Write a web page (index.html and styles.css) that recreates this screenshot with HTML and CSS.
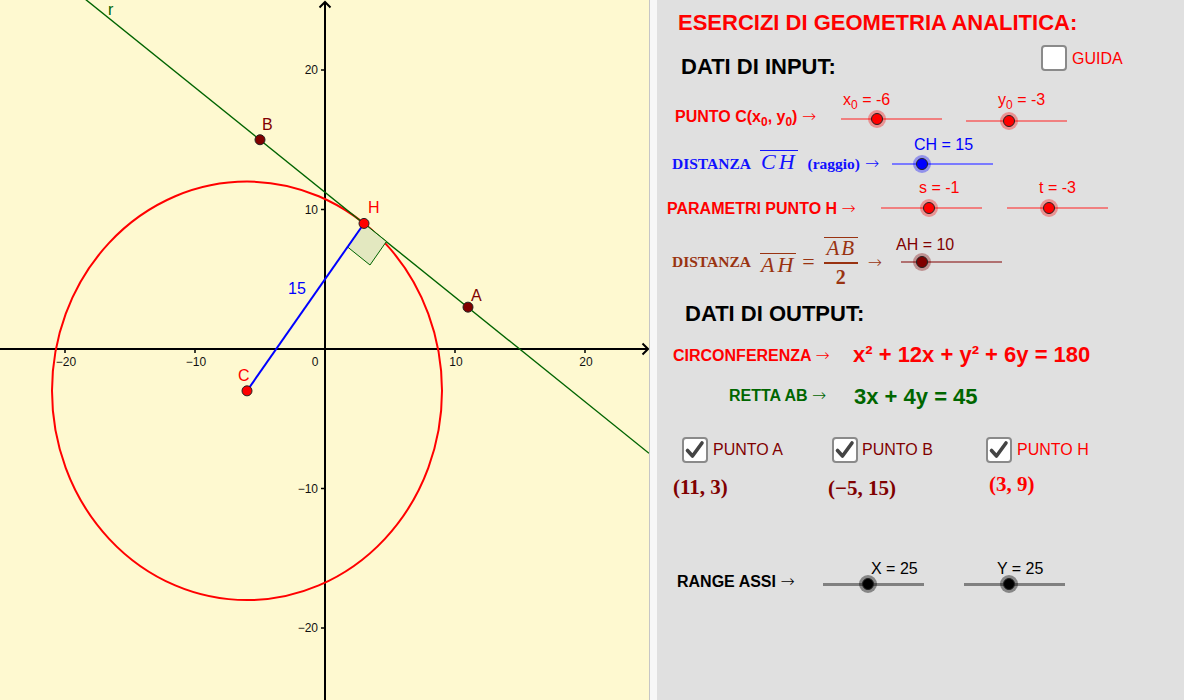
FILE: index.html
```html
<!DOCTYPE html>
<html lang="it">
<head>
<meta charset="utf-8">
<title>Esercizi di geometria analitica</title>
<link rel="stylesheet" href="styles.css">
</head>
<body>
<div class="app">
  <div class="graph">
    <svg class="plot" width="649" height="700" viewBox="0 0 649 700">
      <!-- axes -->
      <line x1="0" y1="349" x2="647" y2="349" stroke="#000" stroke-width="2"/>
      <polyline points="642.5,343.5 648,349 642.5,354.5" fill="none" stroke="#000" stroke-width="2"/>
      <line x1="325" y1="700" x2="325" y2="2" stroke="#000" stroke-width="2"/>
      <polyline points="319.5,7.5 325,2 330.5,7.5" fill="none" stroke="#000" stroke-width="2"/>
      <g stroke="#000" stroke-width="1.5">
        <line x1="65" y1="349" x2="65" y2="353"/>
        <line x1="195" y1="349" x2="195" y2="353"/>
        <line x1="455" y1="349" x2="455" y2="353"/>
        <line x1="585" y1="349" x2="585" y2="353"/>
        <line x1="321" y1="70" x2="325" y2="70"/>
        <line x1="321" y1="209.5" x2="325" y2="209.5"/>
        <line x1="321" y1="488.5" x2="325" y2="488.5"/>
        <line x1="321" y1="628" x2="325" y2="628"/>
      </g>
      <g class="ax" text-anchor="middle">
        <text x="66" y="366">−20</text>
        <text x="196" y="366">−10</text>
        <text x="315" y="366">0</text>
        <text x="456" y="366">10</text>
        <text x="586" y="366">20</text>
      </g>
      <g class="ax" text-anchor="end">
        <text x="318" y="74">20</text>
        <text x="318" y="213.5">10</text>
        <text x="318" y="492.5">−10</text>
        <text x="318" y="632">−20</text>
      </g>
      <!-- circle -->
      <ellipse cx="247" cy="390.85" rx="195" ry="209.25" fill="none" stroke="#ff0000" stroke-width="2"/>
      <!-- line r -->
      <line x1="0" y1="-69.5" x2="649" y2="453.3" stroke="#006400" stroke-width="1.4"/>
      <!-- right angle -->
      <polygon points="364,223.45 386.4,241.5 370,265 347.6,247" fill="#e3e8c0" stroke="#006400" stroke-width="1"/>
      <!-- segment CH -->
      <line x1="247" y1="390.85" x2="364" y2="223.45" stroke="#0000ff" stroke-width="2"/>
      <!-- points -->
      <circle cx="260" cy="139.75" r="5" fill="#800000" stroke="#222" stroke-width="1"/>
      <circle cx="468" cy="307.15" r="5" fill="#800000" stroke="#222" stroke-width="1"/>
      <circle cx="364" cy="223.45" r="5" fill="#ff0000" stroke="#222" stroke-width="1"/>
      <circle cx="247" cy="390.85" r="5" fill="#ff0000" stroke="#222" stroke-width="1"/>
      <g class="pl">
        <text x="262" y="130" fill="#800000">B</text>
        <text x="368" y="213" fill="#ff0000">H</text>
        <text x="471" y="301" fill="#800000">A</text>
        <text x="238" y="381" fill="#ff0000">C</text>
        <text x="108" y="15" fill="#006400">r</text>
        <text x="288" y="294" fill="#0000ff">15</text>
      </g>
    </svg>
  </div>
  <div class="sep"></div>
  <div class="panel">
    <div class="row r-title">
      <div class="title">ESERCIZI DI GEOMETRIA ANALITICA:</div>
    </div>

    <div class="row r-input">
      <div class="head head-in">DATI DI INPUT:</div>
      <div class="box guida-box"></div>
      <div class="guida">GUIDA</div>
    </div>

    <div class="row r-c">
      <div class="lab lab-c">PUNTO C(x<sub>0</sub>, y<sub>0</sub>) <span class="arr">→</span></div>
      <div class="slider red s-x0">
        <div class="slabel">x<sub>0</sub> = -6</div>
        <div class="track"><div class="line"></div><div class="thumb" style="left:30px"></div></div>
      </div>
      <div class="slider red s-y0">
        <div class="slabel">y<sub>0</sub> = -3</div>
        <div class="track"><div class="line"></div><div class="thumb" style="left:37px"></div></div>
      </div>
    </div>

    <div class="row r-ch">
      <div class="lab lab-ch"><span class="dist">DISTANZA</span><span class="ovl">CH</span><span class="rg">(raggio)</span><span class="arr">→</span></div>
      <div class="slider blue s-ch">
        <div class="slabel">CH = 15</div>
        <div class="track"><div class="line"></div><div class="thumb" style="left:24px"></div></div>
      </div>
    </div>

    <div class="row r-h">
      <div class="lab lab-h">PARAMETRI PUNTO H <span class="arr">→</span></div>
      <div class="slider red s-s">
        <div class="slabel">s = -1</div>
        <div class="track"><div class="line"></div><div class="thumb" style="left:42px"></div></div>
      </div>
      <div class="slider red s-t">
        <div class="slabel">t = -3</div>
        <div class="track"><div class="line"></div><div class="thumb" style="left:36px"></div></div>
      </div>
    </div>

    <div class="row r-ah">
      <div class="lab lab-ah">
        <span class="dist">DISTANZA</span>
        <span class="ovl ovl-ah">AH</span>
        <span class="eq">=</span>
        <span class="frac"><span class="num ovl">AB</span><span class="bar"></span><span class="den">2</span></span>
        <span class="arr arr-ah">→</span>
      </div>
      <div class="slider brown s-ah">
        <div class="slabel">AH = 10</div>
        <div class="track"><div class="line"></div><div class="thumb" style="left:15px"></div></div>
      </div>
    </div>

    <div class="row r-out">
      <div class="head head-out">DATI DI OUTPUT:</div>
    </div>

    <div class="row r-circ">
      <div class="lab lab-circ">CIRCONFERENZA <span class="arr">→</span></div>
      <div class="eqn eqn-red">x² + 12x + y² + 6y = 180</div>
    </div>

    <div class="row r-retta">
      <div class="lab lab-retta">RETTA AB <span class="arr">→</span></div>
      <div class="eqn eqn-green">3x + 4y = 45</div>
    </div>

    <div class="row r-checks">
      <div class="chk chk-a">
        <div class="box checked"><svg width="22" height="22" viewBox="0 0 22 22"><path d="M3.5 11.5 L8.5 17 L18 4" fill="none" stroke="#444" stroke-width="3.6" stroke-linecap="round" stroke-linejoin="round"/></svg></div>
        <span class="ctext dark">PUNTO A</span>
      </div>
      <div class="chk chk-b">
        <div class="box checked"><svg width="22" height="22" viewBox="0 0 22 22"><path d="M3.5 11.5 L8.5 17 L18 4" fill="none" stroke="#444" stroke-width="3.6" stroke-linecap="round" stroke-linejoin="round"/></svg></div>
        <span class="ctext dark">PUNTO B</span>
      </div>
      <div class="chk chk-h">
        <div class="box checked"><svg width="22" height="22" viewBox="0 0 22 22"><path d="M3.5 11.5 L8.5 17 L18 4" fill="none" stroke="#444" stroke-width="3.6" stroke-linecap="round" stroke-linejoin="round"/></svg></div>
        <span class="ctext redt">PUNTO H</span>
      </div>
    </div>

    <div class="row r-coords">
      <div class="coord co-a">(11, 3)</div>
      <div class="coord co-b">(−5, 15)</div>
      <div class="coord co-h">(3, 9)</div>
    </div>

    <div class="row r-range">
      <div class="lab lab-range">RANGE ASSI <span class="arr">→</span></div>
      <div class="slider black s-x">
        <div class="slabel">X = 25</div>
        <div class="track"><div class="line"></div><div class="thumb" style="left:39px"></div></div>
      </div>
      <div class="slider black s-y">
        <div class="slabel">Y = 25</div>
        <div class="track"><div class="line"></div><div class="thumb" style="left:39px"></div></div>
      </div>
    </div>
  </div>
</div>
</body>
</html>
```
FILE: styles.css
```css
body {
  margin: 0;
  font-family: "Liberation Sans", Arial, sans-serif;
}
.app {
  display: flex;
  width: 1184px;
  height: 700px;
  overflow: hidden;
}
.graph {
  flex: none;
  width: 649px;
  height: 700px;
  background: #fef9d0;
}
.plot {
  display: block;
}
.ax {
  font-family: "Liberation Sans", Arial, sans-serif;
  font-size: 12px;
  fill: #111;
}
.pl {
  font-family: "Liberation Sans", Arial, sans-serif;
  font-size: 16px;
}
.sep {
  flex: none;
  width: 7px;
  border-left: 1px solid #c6c6c6;
  background: #f7f7f7;
}
.panel {
  flex: 1;
  background: #e0e0e0;
  display: flex;
  flex-direction: column;
}
.row {
  display: flex;
  align-items: flex-start;
  flex: none;
}
sub {
  font-size: 0.75em;
  vertical-align: -0.35em;
  line-height: 0;
}
.arr {
  font-family: "DejaVu Sans", sans-serif;
  font-weight: 200;
  font-size: 17px;
}

/* title */
.r-title { height: 36px; }
.title {
  margin: 10px 0 0 21px;
  font-size: 22px;
  line-height: 26px;
  font-weight: bold;
  color: #ff0000;
  white-space: nowrap;
}

/* headings */
.head {
  font-size: 22px;
  line-height: 26px;
  font-weight: bold;
  color: #000;
  white-space: nowrap;
}
.r-input { height: 48px; }
.head-in {
  margin: 18px 0 0 24px;
  width: 360px;
}
.box {
  flex: none;
  box-sizing: border-box;
  width: 26px;
  height: 26px;
  border: 2px solid #8a8a8a;
  border-radius: 4px;
  background: #fff;
  display: flex;
  align-items: center;
  justify-content: center;
}
.guida-box { margin-top: 9px; }
.guida {
  margin: 14px 0 0 5px;
  font-size: 16px;
  line-height: 18px;
  color: #ff0000;
}

/* labels */
.lab {
  flex: none;
  font-size: 16px;
  line-height: 20px;
  font-weight: bold;
  white-space: nowrap;
}
.r-c { height: 50px; }
.lab-c {
  color: #ff0000;
  margin: 22px 0 0 18px;
  width: 166px;
}

.r-ch { height: 46px; }
.lab-ch {
  color: #1010ff;
  font-family: "Liberation Serif", "Times New Roman", serif;
  margin: 16px 0 0 15px;
  width: 220px;
  height: 28px;
  display: flex;
  align-items: baseline;
}
.ovl {
  display: inline-block;
  font-family: "Liberation Serif", "Times New Roman", serif;
  font-style: italic;
  font-weight: normal;
  font-size: 21px;
  line-height: 15px;
  letter-spacing: 2px;
  padding: 3px 0 0 1px;
  border-top: 1.5px solid currentColor;
}
.lab-ch .ovl {
  font-size: 22px;
  letter-spacing: 3px;
  margin: 0 10px 0 9px;
}
.rg { font-size: 15.5px; margin-right: 5px; }

.r-h { height: 46px; }
.lab-h {
  color: #ff0000;
  margin: 18px 0 0 10px;
  width: 214px;
}

.r-ah { height: 64px; }
.lab-ah {
  color: #993311;
  font-family: "Liberation Serif", "Times New Roman", serif;
  margin: 6px 0 0 15px;
  width: 229px;
  height: 60px;
  display: flex;
  align-items: center;
}
.dist { font-size: 15.5px; }
.ovl-ah { margin-left: 9px; font-size: 22px; letter-spacing: 3px; }
.eq {
  font-size: 22px;
  font-weight: normal;
  margin-left: 6px;
}
.frac {
  display: flex;
  flex-direction: column;
  align-items: center;
  margin-left: 9px;
  width: 34px;
}
.frac .num {
  font-size: 21px;
  padding-top: 3px;
  width: 34px;
  box-sizing: border-box;
  text-align: center;
}
.frac .bar {
  width: 34px;
  height: 1.5px;
  background: currentColor;
  margin-top: 6px;
}
.frac .den {
  font-size: 20px;
  line-height: 20px;
  margin-top: 3px;
}
.arr-ah {
  margin-left: 10px;
}

/* sliders */
.slider {
  flex: none;
  width: 101px;
  display: flex;
  flex-direction: column;
}
.slabel {
  height: 16px;
  font-size: 16px;
  line-height: 16px;
  white-space: nowrap;
}
.track {
  position: relative;
  height: 14px;
  display: flex;
  align-items: center;
}
.line {
  width: 100%;
  height: 2px;
}
.thumb {
  position: absolute;
  top: 1px;
  box-sizing: border-box;
  width: 12px;
  height: 12px;
  border-radius: 50%;
  border: 1px solid #222;
}
.red .slabel { color: #ff0000; }
.red .line { background: #f08080; }
.red .thumb { background: #ff0000; box-shadow: 0 0 0 3px rgba(255, 0, 0, 0.35); }
.blue .slabel { color: #0000ff; }
.blue .line { background: #7a7aff; }
.blue .thumb { background: #0000ff; box-shadow: 0 0 0 3px rgba(0, 0, 255, 0.35); }
.brown .slabel { color: #800000; }
.brown .line { background: #b07070; }
.brown .thumb { background: #800000; box-shadow: 0 0 0 3px rgba(128, 0, 0, 0.35); }
.black .slabel { color: #000; }
.black .line { background: #808080; height: 3px; }
.black .thumb { background: #000; box-shadow: 0 0 0 3px rgba(0, 0, 0, 0.4); }

.s-x0 { margin-top: 8px; }
.s-x0 .slabel { margin-left: 2px; }
.s-x0 .track { margin-top: 4px; }
.s-y0 { margin: 8px 0 0 24px; }
.s-y0 .slabel { margin-left: 32px; }
.s-y0 .track { margin-top: 6px; }
.s-ch { margin-top: 3px; }
.s-ch .slabel { margin-left: 22px; }
.s-ch .track { margin-top: 4px; }
.s-s { margin-top: 0; }
.s-s .slabel { margin-left: 38px; }
.s-s .track { margin-top: 5px; }
.s-t { margin: 0 0 0 25px; }
.s-t .slabel { margin-left: 32px; }
.s-t .track { margin-top: 5px; }
.s-ah { margin-top: 11px; }
.s-ah .slabel { margin-left: -5px; }
.s-ah .track { margin-top: 2px; }
.s-x { margin-top: 51px; }
.s-x .slabel { margin-left: 48px; }
.s-y { margin: 51px 0 0 40px; }
.s-y .slabel { margin-left: 33px; }

/* output */
.r-out { height: 40px; }
.head-out { margin: 11px 0 0 28px; }

.eqn {
  flex: none;
  font-size: 22px;
  line-height: 26px;
  font-weight: bold;
  white-space: nowrap;
}
.eqn-red { color: #ff0000; }
.eqn-green { color: #006600; }

.r-circ { height: 46px; }
.lab-circ {
  color: #ff0000;
  margin: 15px 0 0 16px;
  width: 180px;
}
.r-circ .eqn { margin-top: 12px; }

.r-retta { height: 44px; }
.lab-retta {
  color: #006600;
  margin: 9px 0 0 72px;
  width: 125px;
}
.r-retta .eqn { margin-top: 8px; }

/* checkboxes */
.r-checks {
  height: 50px;
  padding-left: 25px;
}
.chk {
  flex: none;
  display: flex;
  align-items: center;
  margin-top: 17px;
}
.chk-a { width: 150px; }
.chk-b { width: 154px; }
.ctext {
  font-size: 16px;
  line-height: 18px;
  margin-left: 5px;
}
.chk-b .ctext { margin-left: 4px; }
.dark { color: #800000; }
.redt { color: #ff0000; }

.r-coords { height: 40px; }
.coord {
  flex: none;
  font-family: "Liberation Serif", "Times New Roman", serif;
  font-weight: bold;
  font-size: 21px;
  line-height: 24px;
  white-space: nowrap;
}
.co-a { color: #800000; margin: 5px 0 0 16px; width: 155px; }
.co-b { color: #800000; margin-top: 6px; width: 161px; }
.co-h { color: #ff0000; margin-top: 2px; }

.r-range { height: 100px; }
.lab-range {
  color: #000;
  margin: 61px 0 0 20px;
  width: 146px;
}
```
